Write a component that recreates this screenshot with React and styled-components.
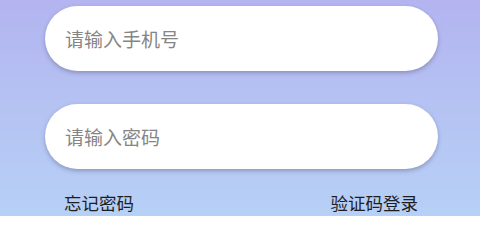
import styled, { createGlobalStyle } from "styled-components";

const GlobalStyle = createGlobalStyle`
  html, body {
    margin: 0;
    padding: 0;
  }
  body {
    font-family: "Noto Sans CJK SC", "Noto Sans", sans-serif;
  }
`;

const Page = styled.div`
  width: 480px;
  height: 216px;
  overflow: hidden;
  box-sizing: border-box;
  padding: 6px 42px 0 45px;
  background: linear-gradient(to bottom, #b3b4f0 0%, #b5c4f3 55%, #b6d0f6 100%);
  display: flex;
  flex-direction: column;
`;

const Field = styled.input`
  box-sizing: border-box;
  width: 393px;
  height: 65px;
  margin-bottom: ${(p) => p.$gap}px;
  padding: 0 20px;
  border: none;
  outline: none;
  border-radius: 33px;
  background: #fff;
  box-shadow: 0 2px 4px rgba(60, 60, 90, 0.35);
  font-family: "Noto Sans CJK SC", "Noto Sans", sans-serif;
  font-size: 19px;
  color: #333;

  &::placeholder {
    color: #858585;
  }
`;

const LinkRow = styled.div`
  display: flex;
  justify-content: space-between;
  padding: 0 20px 0 19px;
`;

const TextLink = styled.span`
  font-size: 17.5px;
  line-height: 24px;
  color: #1e1e1e;
  cursor: pointer;
`;

export default function App() {
  return (
    <>
      <GlobalStyle />
      <Page>
        <Field type="tel" placeholder="请输入手机号" $gap={33} />
        <Field type="password" placeholder="请输入密码" $gap={22} />
        <LinkRow>
          <TextLink>忘记密码</TextLink>
          <TextLink>验证码登录</TextLink>
        </LinkRow>
      </Page>
    </>
  );
}
